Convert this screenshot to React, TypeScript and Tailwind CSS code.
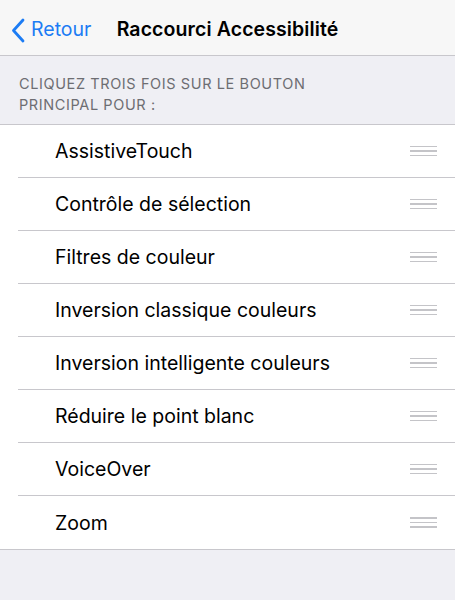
import React from 'react';

const items = [
  'AssistiveTouch',
  'Contrôle de sélection',
  'Filtres de couleur',
  'Inversion classique couleurs',
  'Inversion intelligente couleurs',
  'Réduire le point blanc',
  'VoiceOver',
  'Zoom',
];

const DragHandle: React.FC = () => (
  <div className="flex flex-col gap-[3px] w-[27px]">
    <div className="h-[1.5px] bg-[#c4c4c8]" />
    <div className="h-[1.5px] bg-[#c4c4c8]" />
    <div className="h-[1.5px] bg-[#c4c4c8]" />
  </div>
);

export default function App() {
  return (
    <div
      className="w-[455px] h-[600px] bg-[#efeff4] overflow-hidden"
      style={{ fontFamily: 'Inter, "Liberation Sans", Arial, sans-serif' }}
    >
      <div className="relative h-[56px] pt-[5px] bg-[#f7f7f7] border-b border-[#c8c7cc] flex items-center">
        <div className="flex items-center pl-[11px] text-[#1c7cf4]">
          <svg width="14" height="25" viewBox="0 0 14 25" fill="none">
            <path d="M12 2 L2.5 12.5 L12 23" stroke="#1c7cf4" strokeWidth="2.8" strokeLinecap="round" strokeLinejoin="round" />
          </svg>
          <span className="ml-[6px] text-[19.5px]">Retour</span>
        </div>
        <div className="absolute inset-0 pt-[5px] flex items-center justify-center pointer-events-none">
          <span className="text-[19.5px] font-semibold text-black tracking-[0.1px]">Raccourci Accessibilité</span>
        </div>
      </div>
      <div className="px-[19px] pt-[17px] pb-[9px] text-[14.5px] leading-[21px] text-[#6d6d72] tracking-[0.6px]">
        CLIQUEZ TROIS FOIS SUR LE BOUTON
        <br />
        PRINCIPAL POUR :
      </div>
      <div className="bg-white border-y border-[#c8c7cc]">
        {items.map((label, i) => (
          <div key={label} className="pl-[18px]">
            <div
              className={`h-[53px] flex items-center justify-between pr-[18px] ${
                i < items.length - 1 ? 'border-b border-[#c8c7cc]' : ''
              }`}
            >
              <span className="pl-[37px] pt-[2px] text-[19.5px] text-black">{label}</span>
              <DragHandle />
            </div>
          </div>
        ))}
      </div>
    </div>
  );
}
